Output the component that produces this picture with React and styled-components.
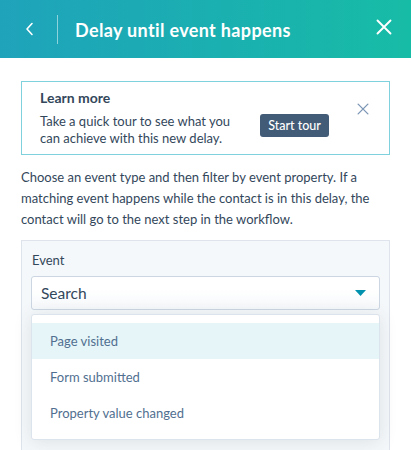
import React from "react";
import styled, { createGlobalStyle } from "styled-components";

const Global = createGlobalStyle`
  html, body { margin: 0; padding: 0; background: #fff; overflow: hidden; }
  body { font-family: Lato, "Open Sans", sans-serif; color: #33475b; -webkit-font-smoothing: antialiased; }
  * { box-sizing: border-box; }
`;

const Page = styled.div`
  width: 411px;
  height: 450px;
  overflow: hidden;
  background: #fff;
`;

const Header = styled.header`
  height: 58px;
  display: flex;
  align-items: center;
  background: linear-gradient(90deg, #1fa3bb 0%, #1ab0b0 55%, #17bca6 100%);
  color: #fff;
`;

const BackButton = styled.button`
  width: 57px;
  height: 58px;
  display: flex;
  align-items: center;
  justify-content: center;
  padding: 0 0 0 3px;
  border: 0;
  background: none;
  color: #fff;
`;

const Divider = styled.span`
  width: 1px;
  height: 29px;
  margin-top: 1px;
  background: rgba(255, 255, 255, 0.5);
`;

const Title = styled.h1`
  flex: 1;
  margin: 0 0 0 17px;
  font-size: 18px;
  font-weight: 700;
  letter-spacing: 0.35px;
  line-height: 24px;
  padding-top: 1px;
`;

const CloseButton = styled.button`
  width: 54px;
  height: 58px;
  display: flex;
  align-items: center;
  justify-content: center;
  padding: 0 0 4px 0;
  border: 0;
  background: none;
  color: #fff;
`;

const Content = styled.main`
  padding: 23px 21px 0 21px;
`;

const Tip = styled.section`
  height: 74px;
  border: 1px solid #7fd1de;
  display: flex;
  align-items: flex-start;
  padding: 6px 0 0 18px;
`;

const TipText = styled.div`
  width: 196px;
`;

const TipTitle = styled.h2`
  margin: 0;
  font-size: 14px;
  line-height: 20px;
  font-weight: 700;
  color: #33475b;
`;

const TipBody = styled.p`
  margin: 5px 0 0;
  font-size: 13px;
  line-height: 16.5px;
  color: #33475b;
`;

const TourButton = styled.button`
  margin: 26px 0 0 24px;
  width: 69px;
  height: 23px;
  border: 0;
  border-radius: 3px;
  background: #425b76;
  color: #fff;
  font-family: inherit;
  font-size: 12.5px;
  font-weight: 500;
  padding: 0;
`;

const TipClose = styled.button`
  margin: 15px 0 0 28px;
  width: 13px;
  height: 13px;
  padding: 0;
  border: 0;
  background: none;
  color: #7c98b6;
  display: flex;
`;

const Intro = styled.p`
  margin: 12px 0 0;
  font-size: 13px;
  line-height: 21px;
  color: #33475b;
`;

const Panel = styled.section`
  margin-top: 10px;
  background: #f5f8fa;
  border: 1px solid #dfe3eb;
  padding: 9px 9px 24px 9px;
`;

const Label = styled.label`
  display: block;
  padding-left: 1px;
  font-size: 13px;
  line-height: 20px;
  color: #33475b;
`;

const Select = styled.div`
  margin-top: 6px;
  height: 34px;
  border: 1px solid #cbd6e2;
  border-radius: 3px;
  background: linear-gradient(180deg, #ffffff 40%, #f6f8fa 100%);
  display: flex;
  align-items: center;
  padding: 0 13px 0 9px;
`;

const SelectText = styled.span`
  flex: 1;
  font-size: 15.5px;
  color: #33475b;
`;

const Menu = styled.ul`
  list-style: none;
  margin: 4px 0 0;
  padding: 8px 0;
  background: #fff;
  border: 1px solid #dbe3ec;
  border-radius: 3px;
  box-shadow: 0 2px 18px rgba(45, 62, 80, 0.12);
`;

const MenuItem = styled.li`
  height: 36px;
  display: flex;
  align-items: center;
  padding-left: 18px;
  font-size: 13px;
  color: #516f90;
  background: ${(p) => (p.$active ? "#e5f5f8" : "transparent")};
`;

const Chevron = () => (
  <svg width="10" height="14" viewBox="0 0 10 14" fill="none">
    <polyline points="7,1.5 2,7 7,12.5" stroke="#fff" strokeWidth="1.6" strokeLinecap="round" strokeLinejoin="round" />
  </svg>
);

const XIcon = ({ size, stroke, width }) => (
  <svg width={size} height={size} viewBox="0 0 16 16" fill="none">
    <path d="M1.5 1.5 L14.5 14.5 M14.5 1.5 L1.5 14.5" stroke={stroke} strokeWidth={width} strokeLinecap="round" />
  </svg>
);

const Caret = () => (
  <svg width="11" height="6" viewBox="0 0 11 6">
    <polygon points="0,0 11,0 5.5,6" fill="#0091ae" />
  </svg>
);

export default function App() {
  return (
    <Page>
      <Global />
      <Header>
        <BackButton aria-label="Back">
          <Chevron />
        </BackButton>
        <Divider />
        <Title>Delay until event happens</Title>
        <CloseButton aria-label="Close">
          <XIcon size={16} stroke="#fff" width={1.9} />
        </CloseButton>
      </Header>
      <Content>
        <Tip>
          <TipText>
            <TipTitle>Learn more</TipTitle>
            <TipBody>
              Take a quick tour to see what you can achieve with this new delay.
            </TipBody>
          </TipText>
          <TourButton>Start tour</TourButton>
          <TipClose aria-label="Dismiss">
            <XIcon size={12} stroke="#7c98b6" width={1.8} />
          </TipClose>
        </Tip>
        <Intro>
          Choose an event type and then filter by event property. If a matching event happens while
          the contact is in this delay, the contact will go to the next step in the workflow.
        </Intro>
        <Panel>
          <Label>Event</Label>
          <Select>
            <SelectText>Search</SelectText>
            <Caret />
          </Select>
          <Menu>
            <MenuItem $active>Page visited</MenuItem>
            <MenuItem>Form submitted</MenuItem>
            <MenuItem>Property value changed</MenuItem>
          </Menu>
        </Panel>
      </Content>
    </Page>
  );
}
